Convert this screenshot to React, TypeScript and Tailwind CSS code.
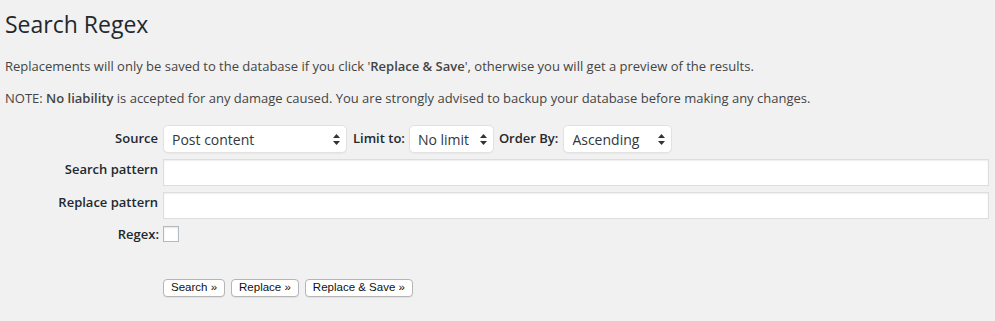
import React from 'react';

const font = { fontFamily: '"Open Sans", "Noto Sans", sans-serif' };

function SelectBox({ value, width, options }: { value: string; width: string; options: string[] }) {
  return (
    <div className={`relative ${width}`}>
      <select
        defaultValue={value}
        className="w-full h-[28px] appearance-none rounded-[5px] border border-[#e2e2e2] bg-white pl-[8px] pr-[24px] text-[14px] text-[#32373c] shadow-[0_1px_1px_rgba(0,0,0,0.04)] outline-none"
      >
        {options.map((o) => (
          <option key={o}>{o}</option>
        ))}
      </select>
      {/* up/down arrows */}
      <svg className="pointer-events-none absolute right-[7px] top-[9px]" width="7" height="11" viewBox="0 0 7 11">
        <path d="M3.5 0 L7 4 L0 4 Z" fill="#333" />
        <path d="M3.5 11 L7 7 L0 7 Z" fill="#333" />
      </svg>
    </div>
  );
}

function TextInput() {
  return (
    <input
      type="text"
      className="h-[27px] flex-1 border border-[#dddddd] bg-white px-2 text-[14px] shadow-[inset_0_1px_2px_rgba(0,0,0,0.07)] outline-none"
    />
  );
}

function Btn({ children }: { children: React.ReactNode }) {
  return (
    <button
      className="h-[18px] rounded-[4px] border border-[#b5b5b5] bg-white px-[7px] text-[11.5px] leading-none text-[#111] shadow-[0_1px_0_rgba(0,0,0,0.06)]"
      style={{ fontFamily: '"Liberation Sans", Arial, sans-serif' }}
    >
      {children}
    </button>
  );
}

export default function App() {
  return (
    <div className="min-h-[321px] w-[995px] bg-[#f1f1f1] text-[#444]" style={font}>
      <div className="pl-[5px] pr-[6px] pt-[10px]">
        <h1 className="text-[23px] leading-[29px] font-normal text-[#23282d]">Search Regex</h1>

        <p className="mt-[18px] text-[13px] leading-[19px]">
          Replacements will only be saved to the database if you click '<strong className="font-semibold">Replace &amp; Save</strong>', otherwise you will get a preview of the results.
        </p>
        <p className="mt-[13px] text-[13px] leading-[19px]">
          NOTE: <strong className="font-semibold">No liability</strong> is accepted for any damage caused. You are strongly advised to backup your database before making any changes.
        </p>

        <div className="mt-[17px] flex flex-col text-[13px]">
          {/* Source row */}
          <div className="flex items-center">
            <label className="w-[155px] pr-[2px] text-right font-semibold text-[#23282d]">Source</label>
            <div className="ml-[3px] flex items-center">
              <SelectBox value="Post content" width="w-[184px]" options={['Post content', 'Post excerpt', 'Post title', 'Comment content']} />
              <span className="ml-[6px] mr-[4px] font-semibold text-[#23282d]">Limit to:</span>
              <SelectBox value="No limit" width="w-[85px]" options={['No limit', '10', '25', '50', '100']} />
              <span className="ml-[5px] mr-[5px] font-semibold text-[#23282d]">Order By:</span>
              <SelectBox value="Ascending" width="w-[109px]" options={['Ascending', 'Descending']} />
            </div>
          </div>

          {/* Search pattern */}
          <div className="mt-[6px] flex items-start">
            <label className="w-[155px] pr-[2px] pt-[1px] text-right font-semibold text-[#23282d]">Search pattern</label>
            <div className="ml-[3px] flex flex-1">
              <TextInput />
            </div>
          </div>

          {/* Replace pattern */}
          <div className="mt-[6px] flex items-start">
            <label className="w-[155px] pr-[2px] pt-[1px] text-right font-semibold text-[#23282d]">Replace pattern</label>
            <div className="ml-[3px] flex flex-1">
              <TextInput />
            </div>
          </div>

          {/* Regex */}
          <div className="mt-[6px] flex items-start">
            <label className="w-[155px] pr-[1px] text-right font-semibold text-[#23282d]">Regex:</label>
            <div className="ml-[3px] pt-[1px]">
              <input
                type="checkbox"
                className="block h-[16px] w-[16px] appearance-none border border-[#b4b9be] bg-white shadow-[inset_0_1px_2px_rgba(0,0,0,0.1)]"
              />
            </div>
          </div>

          {/* Buttons */}
          <div className="mt-[34px] flex gap-[6px] pl-[158px]">
            <Btn>Search »</Btn>
            <Btn>Replace »</Btn>
            <Btn>Replace &amp; Save »</Btn>
          </div>
        </div>
      </div>
    </div>
  );
}
